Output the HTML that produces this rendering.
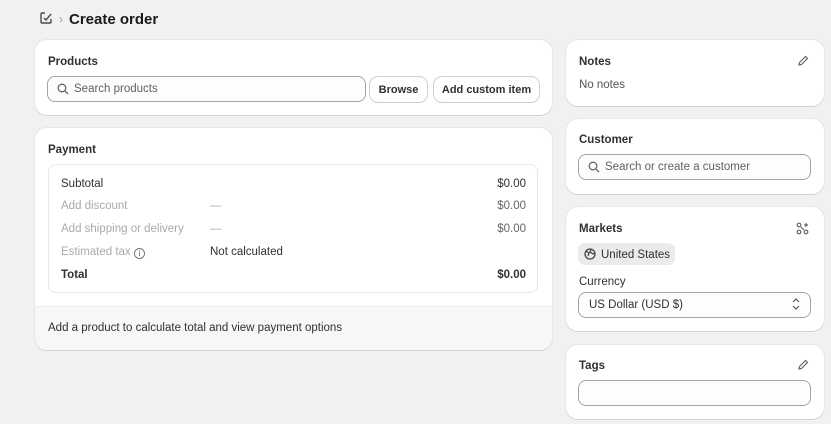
<!DOCTYPE html>
<html><head><style>
*{box-sizing:border-box;margin:0;padding:0}
body{width:831px;height:424px;background:#f1f1f1;font-family:"Liberation Sans",sans-serif;font-size:11.5px;color:#303030;position:relative;overflow:hidden}
.abs{position:absolute}
.card{position:absolute;background:#fff;border-radius:12px;box-shadow:0 1px 0 #d4d4d4,0 0 0 1px #e6e6e6}
.h{position:absolute;font-weight:bold;font-size:11.5px;color:#303030;margin-top:1px}
.inp{position:absolute;border:1px solid #a3a3a3;border-radius:8px;background:#fdfdfd}
.btn{position:absolute;border-radius:8px;background:#fff;box-shadow:0 0 0 1px #d0d0d0,0 1px 0 #b5b5b5;font-weight:bold;font-size:11px;text-align:center;line-height:26px}
.t{position:absolute;white-space:nowrap;margin-top:1px}
.g{color:#aaa}
</style></head><body>
<svg class="abs" style="left:39px;top:11px" width="14" height="14" viewBox="0 0 14 14" fill="none" stroke="#4a4a4a" stroke-width="1.4"><path d="M6 2H3a1 1 0 0 0-1 1v8a1 1 0 0 0 1 1h8a1 1 0 0 0 1-1V8"/><path d="M5 7l2 2 5-6"/></svg>
<div class="t" style="left:59px;top:11px;color:#999;font-size:12px">›</div>
<div class="t" style="left:69px;top:10px;font-size:15px;font-weight:bold;color:#1a1a1a">Create order</div>

<div class="card" style="left:35px;top:40px;width:517px;height:75px"></div>
<div class="h" style="left:48px;top:55px">Products</div>
<div class="inp" style="left:47px;top:76px;width:319px;height:26px"></div>
<svg class="abs" style="left:57px;top:83px" width="12" height="12" viewBox="0 0 12 12" fill="none" stroke="#666" stroke-width="1.3"><circle cx="5" cy="5" r="3.8"/><path d="M8 8l3 3"/></svg>
<div class="t" style="left:74px;top:82px;color:#616161">Search products</div>
<div class="btn" style="left:370px;top:77px;width:57px;height:25px">Browse</div>
<div class="btn" style="left:434px;top:77px;width:105px;height:25px">Add custom item</div>

<div class="card" style="left:35px;top:128px;width:517px;height:222px;overflow:hidden"><div class="abs" style="left:0;top:178px;width:517px;height:44px;background:#f7f7f7;border-top:1px solid #ececec"></div></div>
<div class="h" style="left:48px;top:143px">Payment</div>
<div class="abs" style="left:48px;top:164px;width:490px;height:129px;border:1px solid #e6e6e6;border-radius:8px"></div>
<div class="t" style="left:61px;top:177px">Subtotal</div><div class="t" style="right:305px;top:177px">$0.00</div>
<div class="t g" style="left:61px;top:199px">Add discount</div><div class="t g" style="left:210px;top:199px">—</div><div class="t" style="right:305px;top:199px;color:#666">$0.00</div>
<div class="t g" style="left:61px;top:222px">Add shipping or delivery</div><div class="t g" style="left:210px;top:222px">—</div><div class="t" style="right:305px;top:222px;color:#666">$0.00</div>
<div class="t g" style="left:61px;top:245px">Estimated tax <span style="display:inline-block;width:11px;height:11px;border:1px solid #777;border-radius:50%;font-size:8px;line-height:10px;text-align:center;color:#555;vertical-align:-1px">i</span></div><div class="t" style="left:210px;top:245px">Not calculated</div>
<div class="t" style="left:61px;top:268px;font-weight:bold">Total</div><div class="t" style="right:305px;top:268px;font-weight:bold">$0.00</div>
<div class="t" style="left:48px;top:321px">Add a product to calculate total and view payment options</div>

<div class="card" style="left:566px;top:40px;width:258px;height:66px"></div>
<div class="h" style="left:579px;top:55px">Notes</div>
<svg class="abs" style="left:797px;top:55px" width="12" height="12" viewBox="0 0 12 12" fill="none" stroke="#666" stroke-width="1.2"><path d="M2 10l.5-2.5L8.5 1.5l2 2-6 6z"/></svg>
<div class="t" style="left:579px;top:78px;color:#555">No notes</div>

<div class="card" style="left:566px;top:119px;width:258px;height:75px"></div>
<div class="h" style="left:579px;top:133px">Customer</div>
<div class="inp" style="left:578px;top:154px;width:233px;height:26px"></div>
<svg class="abs" style="left:588px;top:161px" width="12" height="12" viewBox="0 0 12 12" fill="none" stroke="#666" stroke-width="1.3"><circle cx="5" cy="5" r="3.8"/><path d="M8 8l3 3"/></svg>
<div class="t" style="left:605px;top:160px;color:#616161">Search or create a customer</div>

<div class="card" style="left:566px;top:207px;width:258px;height:124px"></div>
<div class="h" style="left:579px;top:222px">Markets</div>
<svg class="abs" style="left:796px;top:222px" width="13" height="13" viewBox="0 0 13 13" fill="none" stroke="#666" stroke-width="1.2"><circle cx="3" cy="3" r="1.8"/><circle cx="10" cy="10" r="1.8"/><circle cx="3" cy="10" r="1.8"/><path d="M10 1v4M8 3h4M5 5l3 3"/></svg>
<div class="abs" style="left:578px;top:243px;width:97px;height:22px;background:#ebebeb;border-radius:7px"></div>
<svg class="abs" style="left:584px;top:248px" width="12" height="12" viewBox="0 0 12 12" fill="none" stroke="#444" stroke-width="1.3"><circle cx="6" cy="6" r="5"/><path d="M2 3l3 2-1 3M7 1.5L6 4l3 2 1.5-1"/></svg>
<div class="t" style="left:601px;top:248px">United States</div>
<div class="t" style="left:579px;top:275px">Currency</div>
<div class="inp" style="left:578px;top:292px;width:233px;height:26px"></div>
<div class="t" style="left:589px;top:298px">US Dollar (USD $)</div>
<svg class="abs" style="left:792px;top:298px" width="8" height="12" viewBox="0 0 8 12" fill="none" stroke="#555" stroke-width="1.2"><path d="M1 4l3-3 3 3M1 8l3 3 3-3"/></svg>

<div class="card" style="left:566px;top:345px;width:258px;height:74px"></div>
<div class="h" style="left:579px;top:359px">Tags</div>
<svg class="abs" style="left:797px;top:359px" width="12" height="12" viewBox="0 0 12 12" fill="none" stroke="#666" stroke-width="1.2"><path d="M2 10l.5-2.5L8.5 1.5l2 2-6 6z"/></svg>
<div class="inp" style="left:578px;top:380px;width:233px;height:26px"></div>
</body></html>
